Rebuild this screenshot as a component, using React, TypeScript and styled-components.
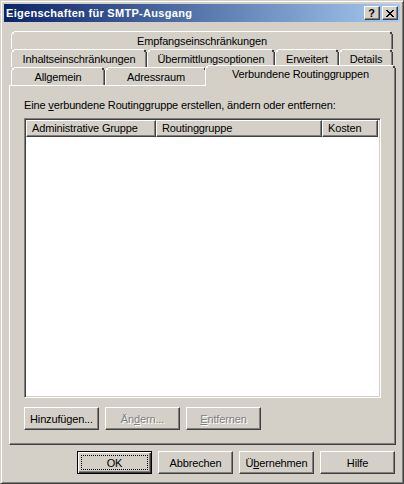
import React from 'react';
import styled, { createGlobalStyle } from 'styled-components';

const FACE = '#d4d0c8';
const SHADOW = '#808080';
const DARK = '#404040';

const GlobalStyle = createGlobalStyle`
  html, body { margin: 0; padding: 0; background: ${FACE}; }
  body {
    font-family: "Liberation Sans", Arial, sans-serif;
    font-size: 11px;
    letter-spacing: -0.15px;
    color: #000;
  }
  * { box-sizing: border-box; }
`;

const Window = styled.div`
  width: 404px;
  height: 484px;
  background: ${FACE};
  border: 1px solid;
  border-color: ${FACE} ${DARK} ${DARK} ${FACE};
  box-shadow: inset 1px 1px #fff, inset -1px -1px ${SHADOW};
  padding: 3px;
  display: flex;
  flex-direction: column;
`;

const TitleBar = styled.div`
  height: 18px;
  display: flex;
  align-items: center;
  padding: 0 2px 0 1px;
  background: linear-gradient(to right, #0a246a, #a6caf0);
`;

const TitleText = styled.div`
  flex: 1;
  color: #fff;
  font-weight: bold;
  font-size: 11px;
  letter-spacing: 0.3px;
  line-height: 13px;
  padding-left: 1px;
  white-space: nowrap;
`;

const CaptionButtons = styled.div`
  display: flex;
  gap: 2px;
`;

const CaptionButton = styled.div`
  width: 16px;
  height: 14px;
  background: ${FACE};
  border: 1px solid;
  border-color: #fff ${DARK} ${DARK} #fff;
  box-shadow: inset -1px -1px ${SHADOW};
  display: flex;
  align-items: center;
  justify-content: center;
  font-weight: bold;
  font-size: 11px;
  letter-spacing: 0;
  line-height: 11px;
  padding-right: 1px;
`;

const Body = styled.div`
  flex: 1;
  display: flex;
  flex-direction: column;
  padding: 9px 0 0 5px;
`;

const TabStrip = styled.div`
  display: flex;
  flex-direction: column;
  padding-left: 2px;
`;

const TabRow = styled.div`
  display: flex;
  height: 18px;
`;

const Tab = styled.div<{ $w: number; $active?: boolean }>`
  position: relative;
  flex: none;
  width: ${(p) => (p.$active ? p.$w + 4 : p.$w)}px;
  height: ${(p) => (p.$active ? 21 : 18)}px;
  margin: ${(p) => (p.$active ? '-2px -2px 0 -2px' : '0')};
  z-index: ${(p) => (p.$active ? 2 : 0)};
  background: ${FACE};
  border-top: 1px solid #fff;
  border-left: 1px solid #fff;
  border-right: 1px solid ${DARK};
  box-shadow: inset -1px 0 ${SHADOW};
  padding-top: ${(p) => (p.$active ? 2 : 3)}px;
  line-height: 13px;
  text-align: center;
  white-space: nowrap;
  &::before {
    content: '';
    position: absolute;
    left: -1px;
    top: -1px;
    width: 2px;
    height: 2px;
    border-top: 1px solid ${FACE};
    border-left: 1px solid ${FACE};
    background: #fff;
  }
  &::after {
    content: '';
    position: absolute;
    right: -1px;
    top: -1px;
    width: 2px;
    height: 2px;
    border-top: 1px solid ${FACE};
    border-right: 1px solid ${FACE};
    background: ${DARK};
  }
`;

const Panel = styled.div`
  position: relative;
  width: 387px;
  height: 360px;
  border: 1px solid;
  border-color: #fff ${DARK} ${DARK} #fff;
  box-shadow: inset -1px -1px ${SHADOW};
  padding: 13px 0 0 14px;
  display: flex;
  flex-direction: column;
`;

const Label = styled.div`
  line-height: 13px;
  white-space: nowrap;
`;

const ListBox = styled.div`
  margin-top: 6px;
  width: 357px;
  height: 280px;
  background: #fff;
  border: 1px solid;
  border-color: ${SHADOW} #fff #fff ${SHADOW};
  box-shadow: inset 1px 1px ${DARK}, inset -1px -1px ${FACE};
  padding: 1px;
`;

const HeaderRow = styled.div`
  display: flex;
  height: 17px;
`;

const HeaderCell = styled.div<{ $w: number }>`
  width: ${(p) => p.$w}px;
  height: 17px;
  flex: none;
  background: ${FACE};
  border: 1px solid;
  border-color: #fff ${DARK} ${DARK} #fff;
  box-shadow: inset -1px -1px ${SHADOW};
  padding: 1px 0 0 5px;
  line-height: 13px;
  white-space: nowrap;
  overflow: hidden;
`;

const ButtonRow = styled.div<{ $end?: boolean }>`
  display: flex;
  gap: 6px;
  justify-content: ${(p) => (p.$end ? 'flex-end' : 'flex-start')};
`;

const PanelButtons = styled(ButtonRow)`
  margin-top: 9px;
`;

const DialogButtons = styled(ButtonRow)`
  margin-top: 6px;
  width: 387px;
  padding-right: 1px;
`;

const Button = styled.div<{ $disabled?: boolean; $default?: boolean }>`
  position: relative;
  width: 75px;
  height: 23px;
  flex: none;
  background: ${FACE};
  border: 1px solid;
  border-color: ${(p) => (p.$default ? '#000' : `#fff ${DARK} ${DARK} #fff`)};
  box-shadow: ${(p) =>
    p.$default
      ? `inset 1px 1px #fff, inset -1px -1px ${DARK}, inset -2px -2px ${SHADOW}`
      : `inset -1px -1px ${SHADOW}`};
  display: flex;
  align-items: center;
  justify-content: center;
  padding-top: 1px;
  line-height: 13px;
  white-space: nowrap;
  color: ${(p) => (p.$disabled ? SHADOW : '#000')};
  text-shadow: ${(p) => (p.$disabled ? '1px 1px #fff' : 'none')};
`;

const FocusRect = styled.div`
  position: absolute;
  inset: 3px;
  border: 1px dotted #000;
  pointer-events: none;
`;

const CloseGlyph = () => (
  <svg width="8" height="7" viewBox="0 0 8 7" shapeRendering="crispEdges">
    <g fill="#000">
      <rect x="0" y="0" width="2" height="1" />
      <rect x="6" y="0" width="2" height="1" />
      <rect x="1" y="1" width="2" height="1" />
      <rect x="5" y="1" width="2" height="1" />
      <rect x="2" y="2" width="4" height="1" />
      <rect x="3" y="3" width="2" height="1" />
      <rect x="2" y="4" width="4" height="1" />
      <rect x="1" y="5" width="2" height="1" />
      <rect x="5" y="5" width="2" height="1" />
      <rect x="0" y="6" width="2" height="1" />
      <rect x="6" y="6" width="2" height="1" />
    </g>
  </svg>
);

export default function App() {
  return (
    <>
      <GlobalStyle />
      <Window>
        <TitleBar>
          <TitleText>Eigenschaften für SMTP-Ausgang</TitleText>
          <CaptionButtons>
            <CaptionButton>?</CaptionButton>
            <CaptionButton>
              <CloseGlyph />
            </CaptionButton>
          </CaptionButtons>
        </TitleBar>
        <Body>
          <TabStrip>
            <TabRow>
              <Tab $w={382}>Empfangseinschränkungen</Tab>
            </TabRow>
            <TabRow>
              <Tab $w={136}>Inhaltseinschränkungen</Tab>
              <Tab $w={128}>Übermittlungsoptionen</Tab>
              <Tab $w={64}>Erweitert</Tab>
              <Tab $w={54}>Details</Tab>
            </TabRow>
            <TabRow>
              <Tab $w={94}>Allgemein</Tab>
              <Tab $w={102}>Adressraum</Tab>
              <Tab $w={187} $active>
                Verbundene Routinggruppen
              </Tab>
            </TabRow>
          </TabStrip>
          <Panel>
            <Label>
              Eine <u>v</u>erbundene Routinggruppe erstellen, ändern oder entfernen:
            </Label>
            <ListBox>
              <HeaderRow>
                <HeaderCell $w={130}>Administrative Gruppe</HeaderCell>
                <HeaderCell $w={166}>Routinggruppe</HeaderCell>
                <HeaderCell $w={56}>Kosten</HeaderCell>
              </HeaderRow>
            </ListBox>
            <PanelButtons>
              <Button>Hinzufügen...</Button>
              <Button $disabled>
                Än<u>d</u>ern...
              </Button>
              <Button $disabled>
                <u>E</u>ntfernen
              </Button>
            </PanelButtons>
          </Panel>
          <DialogButtons $end>
            <Button $default>
              OK
              <FocusRect />
            </Button>
            <Button>Abbrechen</Button>
            <Button>
              Ü<u>b</u>ernehmen
            </Button>
            <Button>Hilfe</Button>
          </DialogButtons>
        </Body>
      </Window>
    </>
  );
}
